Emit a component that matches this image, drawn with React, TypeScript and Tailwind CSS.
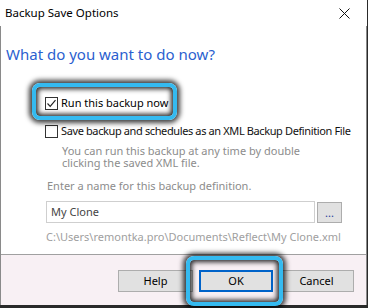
import React from "react";

const font = { fontFamily: '"Noto Sans", "Open Sans", sans-serif' };

function Check({ checked }: { checked?: boolean }) {
  return (
    <div className="w-[13px] h-[13px] border border-[#333333] bg-white flex items-center justify-center shrink-0">
      {checked && (
        <svg width="11" height="11" viewBox="0 0 11 11">
          <path d="M1.5 5.5 L4.2 8.3 L9.5 2.2" fill="none" stroke="#222" strokeWidth="1.2" />
        </svg>
      )}
    </div>
  );
}

export default function App() {
  return (
    <div className="w-[368px] h-[308px] bg-[#2a2a2a] relative overflow-hidden text-[11px] text-black whitespace-nowrap" style={font}>
      <div className="w-[367px] h-[305px] bg-white flex flex-col">
        {/* title bar */}
        <div className="h-[26px] flex items-center justify-between pl-[5px] pr-[17px] shrink-0">
          <span className="text-[11.5px] leading-[16px] text-black">Backup Save Options</span>
          <svg width="11" height="11" viewBox="0 0 11 11">
            <path d="M0.5 0.5 L10.5 10.5 M10.5 0.5 L0.5 10.5" stroke="#111" strokeWidth="1" />
          </svg>
        </div>
        {/* body */}
        <div className="flex-1 flex flex-col border-l border-r border-[#8a8a8a]">
          <div className="flex-1 flex flex-col bg-white pl-[5px]">
            <div className="mt-[17px] text-[15px] leading-[22px] text-[#2b5fcf]">What do you want to do now?</div>
            <div className="mt-[30px] ml-[39px] h-[16px] flex items-center gap-[3px]">
              <Check checked />
              <span className="leading-[16px]">Run this backup now</span>
            </div>
            <div className="mt-[12px] ml-[39px] h-[16px] flex items-center gap-[3px]">
              <Check />
              <span className="leading-[16px] text-[#111] tracking-[-0.38px]">Save backup and schedules as an XML Backup Definition File</span>
            </div>
            <p className="mt-[6px] ml-[56px] text-[#8c8c8c] leading-[12px]">
              You can run this backup at any time by double
              <br />
              clicking the saved XML file.
            </p>
            <div className="mt-[10px] ml-[41px] leading-[14px] text-[#8c8c8c]">Enter a name for this backup definition.</div>
            <div className="mt-[8px] ml-[40px] flex gap-[2px]">
              <div className="w-[269px] h-[22px] border border-[#cfcfcf] flex items-center pl-[4px] text-[#444]">My Clone</div>
              <div className="w-[25px] h-[21px] mt-[1px] border border-[#adadad] bg-[#e1e1e1] flex items-center justify-center text-[#1e3f9a] leading-[10px]">...</div>
            </div>
            <div className="mt-[7px] ml-[40px] leading-[14px] text-[#a0a0a0]">C:\Users\remontka.pro\Documents\Reflect\My Clone.xml</div>
          </div>
          {/* footer */}
          <div className="h-[51px] shrink-0 border-t border-[#a0a0a0] bg-[#f8f0f4] flex justify-end gap-[6px] pt-[15px] pr-[12px]">
            <div className="w-[75px] h-[22px] border border-[#adadad] bg-[#e1e1e1] flex items-center justify-center">Help</div>
            <div className="w-[74px] h-[22px] border-2 border-[#0063c9] bg-[#e1e1e1] flex items-center justify-center">OK</div>
            <div className="w-[75px] h-[22px] border border-[#adadad] bg-[#e1e1e1] flex items-center justify-center">Cancel</div>
          </div>
        </div>
      </div>
      {/* highlight overlays */}
      <div className="absolute left-[32px] top-[83px] w-[145px] h-[37px] rounded-[8px] border-[4px] border-[#34baf0] shadow-[0_0_5px_3px_rgba(0,0,0,0.75),inset_0_0_5px_2px_rgba(0,0,0,0.85)]" />
      <div className="absolute left-[186px] top-[256px] w-[97px] h-[50px] rounded-[8px] border-[4px] border-[#34baf0] shadow-[0_0_5px_3px_rgba(0,0,0,0.75),inset_0_0_5px_2px_rgba(0,0,0,0.85)]" />
    </div>
  );
}
